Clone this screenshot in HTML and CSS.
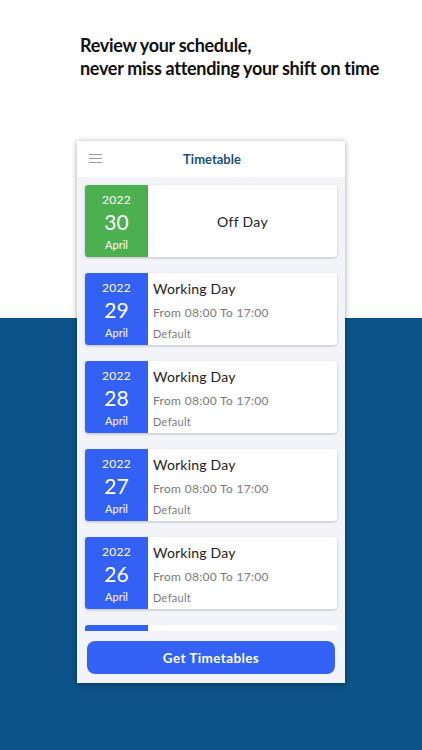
FILE: index.html
```html
<!DOCTYPE html>
<html>
<head>
<meta charset="utf-8">
<link rel="stylesheet" href="styles.css">
</head>
<body>
<div class="page">
  <h1 class="headline">Review your schedule,<br>never miss attending your shift on time</h1>
  <div class="stage">
    <div class="phone">
      <div class="appbar">
        <svg class="menu" width="13" height="9" viewBox="0 0 13 9"><path d="M0 0.5H13M0 4.5H13M0 8.5H13" stroke="#9a9a9a" stroke-width="1"/></svg>
        <span class="apptitle">Timetable</span>
      </div>
      <div class="list">
        <div class="card">
          <div class="date green"><span class="yr">2022</span><span class="day">30</span><span class="mon">April</span></div>
          <div class="info off">Off Day</div>
        </div>
        <div class="card">
          <div class="date blue"><span class="yr">2022</span><span class="day">29</span><span class="mon">April</span></div>
          <div class="info"><span class="kind">Working Day</span><span class="hours">From 08:00 To 17:00</span><span class="note">Default</span></div>
        </div>
        <div class="card">
          <div class="date blue"><span class="yr">2022</span><span class="day">28</span><span class="mon">April</span></div>
          <div class="info"><span class="kind">Working Day</span><span class="hours">From 08:00 To 17:00</span><span class="note">Default</span></div>
        </div>
        <div class="card">
          <div class="date blue"><span class="yr">2022</span><span class="day">27</span><span class="mon">April</span></div>
          <div class="info"><span class="kind">Working Day</span><span class="hours">From 08:00 To 17:00</span><span class="note">Default</span></div>
        </div>
        <div class="card">
          <div class="date blue"><span class="yr">2022</span><span class="day">26</span><span class="mon">April</span></div>
          <div class="info"><span class="kind">Working Day</span><span class="hours">From 08:00 To 17:00</span><span class="note">Default</span></div>
        </div>
        <div class="card peek">
          <div class="date blue"></div>
          <div class="info"></div>
        </div>
      </div>
      <div class="footer">
        <button class="cta">Get Timetables</button>
      </div>
    </div>
  </div>
</div>
</body>
</html>
```

FILE: styles.css
```css
* { box-sizing: border-box; }
html, body { margin: 0; padding: 0; }
body {
  width: 422px;
  height: 750px;
  overflow: hidden;
  font-family: "Lato", "Noto Sans", sans-serif;
  background: linear-gradient(to bottom, #ffffff 0, #ffffff 318px, #0c5389 318px, #0c5389 100%);
}
.page {
  display: flex;
  flex-direction: column;
  height: 750px;
}
.headline {
  margin: 34px 0 0 80px;
  font-family: "Lato", sans-serif;
  font-weight: 700;
  font-size: 18px;
  line-height: 23px;
  color: #111;
  letter-spacing: -0.3px;
}
.stage {
  padding: 61px 0 0 77px;
}
.phone {
  width: 268px;
  height: 542px;
  background: #f3f4f9;
  box-shadow: 0 1px 6px rgba(0,0,0,0.35);
  display: flex;
  flex-direction: column;
  overflow: hidden;
}
.appbar {
  height: 36px;
  background: #fff;
  display: flex;
  align-items: center;
  position: relative;
  justify-content: center;
}
.menu {
  position: absolute;
  left: 12px;
  top: 13px;
}
.apptitle {
  font-weight: 700;
  font-size: 13px;
  color: #1d4f7c;
  margin-left: 2px;
}
.list {
  flex: 1;
  overflow: hidden;
  padding: 8px 8px 0 8px;
  display: flex;
  flex-direction: column;
  gap: 16px;
}
.card {
  height: 72px;
  flex: none;
  display: flex;
  background: #fff;
  border-radius: 3px;
  box-shadow: 0 1px 3px rgba(0,0,0,0.22);
  overflow: hidden;
}
.card.peek { height: 6px; box-shadow: none; border-radius: 3px 3px 0 0; }
.date {
  width: 63px;
  flex: none;
  display: flex;
  flex-direction: column;
  align-items: center;
  color: #fff;
  padding-top: 7px;
}
.green { background: #4caf50; }
.blue { background: #3361f6; }
.yr { font-size: 12px; line-height: 15px; letter-spacing: 0.3px; }
.day { font-size: 21px; line-height: 25px; margin-top: 2px; }
.mon { font-size: 11px; line-height: 14px; margin-top: 4px; }
.info {
  flex: 1;
  display: flex;
  flex-direction: column;
  padding: 7px 0 0 5px;
}
.info.off {
  align-items: center;
  justify-content: center;
  padding: 0;
  font-size: 14px;
  color: #222;
  letter-spacing: 0.3px;
}
.kind { font-size: 14px; line-height: 18px; color: #222; letter-spacing: 0.2px; }
.hours { font-size: 12px; line-height: 15px; color: #7a7a7a; margin-top: 7px; letter-spacing: 0.3px; }
.note { font-size: 11px; line-height: 13px; color: #7a7a7a; margin-top: 7px; letter-spacing: 0.3px; }
.footer {
  height: 52px;
  flex: none;
  padding: 0 10px 9px 10px;
  display: flex;
  align-items: flex-end;
}
.cta {
  width: 100%;
  height: 33px;
  border: none;
  border-radius: 8px;
  background: #3461f6;
  color: #fff;
  font-family: "Lato", sans-serif;
  font-weight: 700;
  font-size: 13.5px;
  letter-spacing: 0.4px;
}
```
